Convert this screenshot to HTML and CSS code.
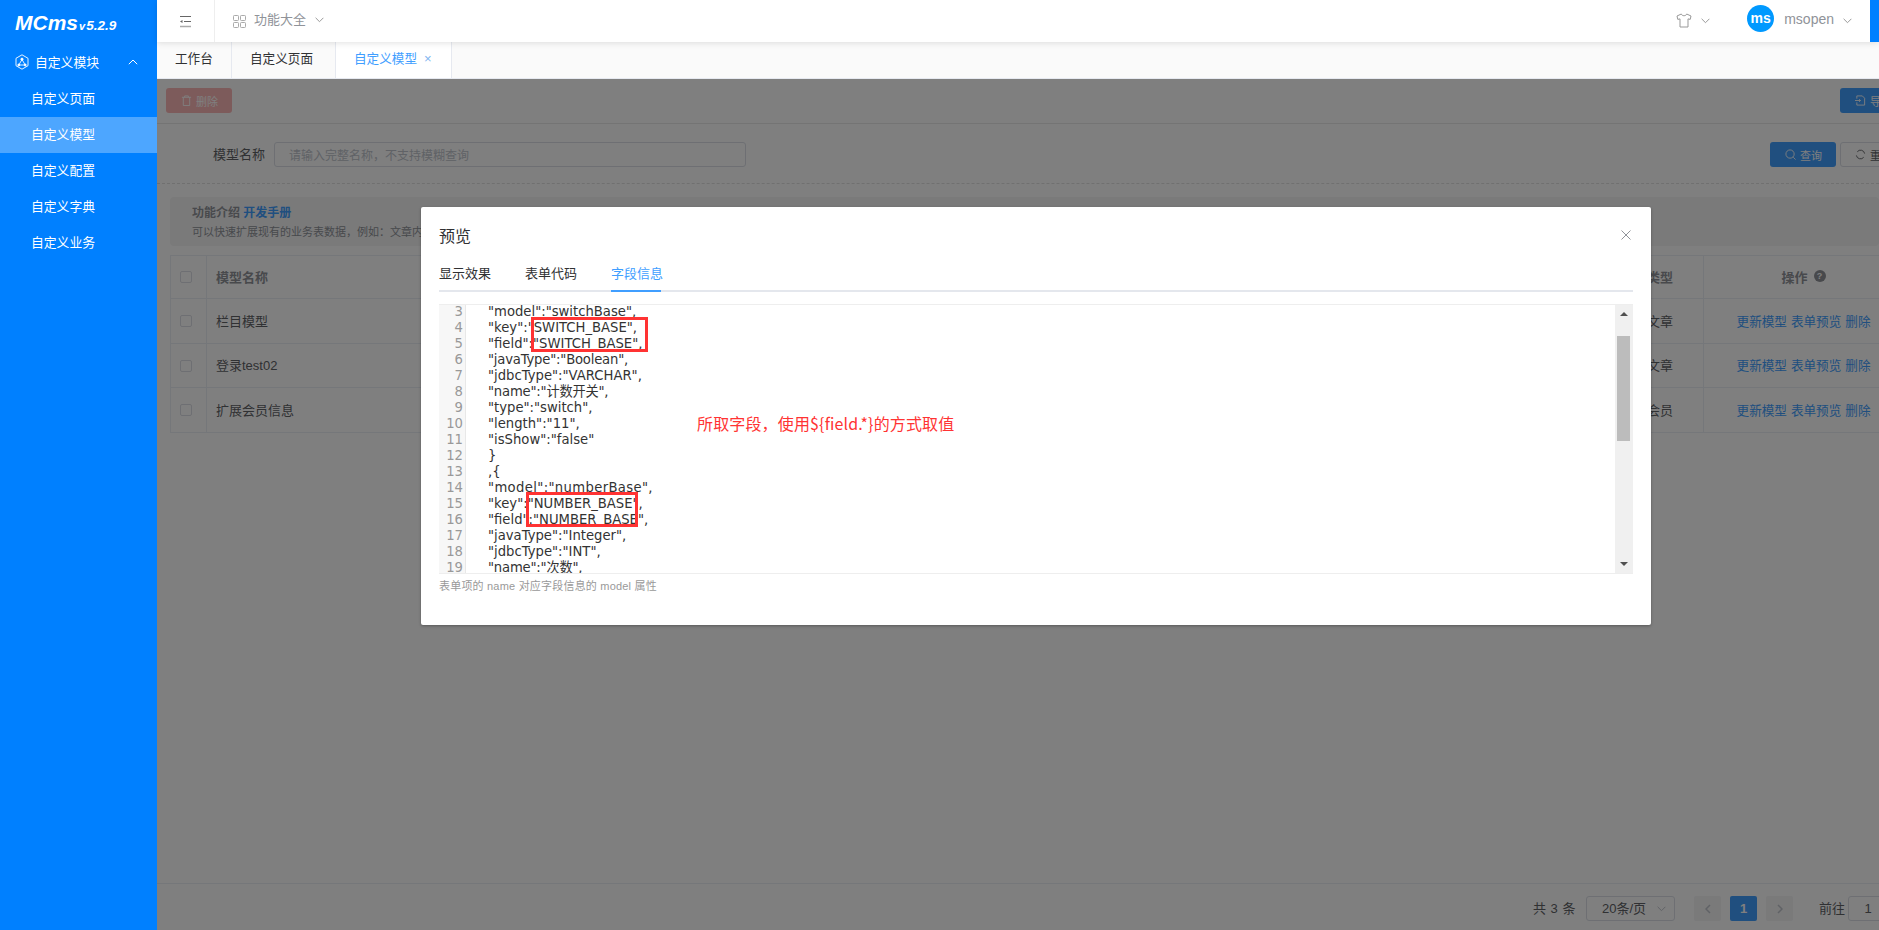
FILE: index.html
```html
<!DOCTYPE html>
<html lang="zh-CN">
<head>
<meta charset="utf-8">
<title>MCms</title>
<link rel="stylesheet" href="styles.css">
</head>
<body>
<div class="app">
  <aside class="sidebar">
    <div class="logo"><span class="logo-name">MCms</span><span class="logo-v">v</span><span class="logo-ver">5.2.9</span></div>
    <div class="menu-group">
      <svg class="menu-ico" viewBox="0 0 14 16" width="14" height="16" fill="none" stroke="#fff" stroke-width=".9"><path d="M7 .8 13 4.300v7.400L7 15.200 1 11.700V4.300z"/><path d="M7 5.500 3.800 11h6.400z"/><circle cx="7" cy="5.200" r="1.100" fill="#fff"/><circle cx="3.800" cy="11" r="1" fill="#fff"/><circle cx="10.200" cy="11" r="1" fill="#fff"/></svg>
      <span class="menu-group-text">自定义模块</span>
      <svg class="menu-caret" viewBox="0 0 10 6" width="10" height="6" fill="none" stroke="#fff" stroke-width="1"><path d="M.8 5.200 5 1l4.200 4.200"/></svg>
    </div>
    <div class="menu-item">自定义页面</div>
    <div class="menu-item active">自定义模型</div>
    <div class="menu-item">自定义配置</div>
    <div class="menu-item">自定义字典</div>
    <div class="menu-item">自定义业务</div>
  </aside>
  <main class="main">
    <header class="topbar">
      <div class="fold">
        <svg viewBox="0 0 13 13" width="13" height="13" fill="none" stroke="#666" stroke-width="1"><path d="M1 1.500h11M5 6.500h7"/><path d="M1 11.500h11" stroke="#aaa" stroke-width="1.500"/><path d="M1 6.500 3.500 5v3z" fill="#666" stroke="none"/></svg>
      </div>
      <div class="topnav">
        <svg viewBox="0 0 13 13" width="13" height="13" fill="none" stroke="#aaa" stroke-width="1"><rect x=".5" y=".5" width="5" height="5" rx=".8"/><rect x="7.500" y=".5" width="5" height="5" rx=".8"/><rect x=".5" y="7.500" width="5" height="5" rx=".8"/><rect x="7.500" y="7.500" width="5" height="5" rx=".8"/></svg>
        <span class="topnav-text">功能大全</span>
        <svg class="chev chev-nav" viewBox="0 0 9 6" width="9" height="6" fill="none" stroke="#999" stroke-width="1"><path d="M.6.8 4.500 4.700 8.400.8"/></svg>
      </div>
      <div class="top-right">
        <svg class="shirt" viewBox="0 0 16 15" width="16" height="15" fill="none" stroke="#999" stroke-width="1"><path d="M5.300 1 1 3l.8 3.400 2.200-.5V14h8V5.900l2.200.5L15 3l-4.300-2C10 3.300 6 3.300 5.300 1z"/></svg>
        <svg class="chev shirt-chev" viewBox="0 0 9 6" width="9" height="6" fill="none" stroke="#999" stroke-width="1"><path d="M.6.8 4.500 4.700 8.400.8"/></svg>
        <div class="avatar">ms</div>
        <span class="username">msopen</span>
        <svg class="chev" viewBox="0 0 9 6" width="9" height="6" fill="none" stroke="#999" stroke-width="1"><path d="M.6.8 4.500 4.700 8.400.8"/></svg>
        <div class="strip"></div>
      </div>
    </header>
    <nav class="tabsbar">
      <div class="tab">工作台</div>
      <div class="tab tab-page">自定义页面</div>
      <div class="tab current">自定义模型<span class="tab-close">×</span></div>
    </nav>
    <section class="content">
      <div class="toolbar">
        <button class="btn btn-del">
          <svg viewBox="0 0 12 12" width="11" height="11" fill="none" stroke="#fff" stroke-width="1"><path d="M1 2.500h10M4 2.500V1h4v1.500M2.500 2.500v9h7v-9"/></svg>删除</button>
        <button class="btn btn-import">
          <svg viewBox="0 0 12 12" width="11" height="11" fill="none" stroke="#fff" stroke-width="1"><path d="M2 4V1h6l2.500 2.500V11H2V8"/><path d="M0 6h6M4.500 4.500 6 6 4.500 7.500"/></svg>导入</button>
      </div>
      <div class="search">
        <label class="search-label">模型名称</label>
        <div class="search-input">请输入完整名称，不支持模糊查询</div>
        <button class="btn btn-query">
          <svg viewBox="0 0 12 12" width="11" height="11" fill="none" stroke="#fff" stroke-width="1"><circle cx="5.500" cy="5.500" r="4.500"/><path d="m9 9 2.500 2.500"/></svg>查询</button>
        <button class="btn btn-reset">
          <svg viewBox="0 0 12 12" width="11" height="11" fill="none" stroke="#606266" stroke-width="1"><path d="M10.500 5A4.500 4.500 0 0 0 2.500 3M1.500 7a4.500 4.500 0 0 0 8 2"/></svg>重置</button>
      </div>
      <div class="notice">
        <div class="notice-title">功能介绍 <a class="notice-link">开发手册</a></div>
        <div class="notice-desc">可以快速扩展现有的业务表数据，例如：文章内容、会员信息等，不需要修改原有的业务表</div>
      </div>
      <div class="table">
        <div class="row head">
          <div class="c-check"><i class="box"></i></div>
          <div class="c-name">模型名称</div>
          <div class="c-type">类型</div>
          <div class="c-act">操作 <i class="help">?</i></div>
        </div>
        <div class="row">
          <div class="c-check"><i class="box"></i></div>
          <div class="c-name">栏目模型</div>
          <div class="c-type">文章</div>
          <div class="c-act"><a>更新模型</a> <a>表单预览</a> <a>删除</a></div>
        </div>
        <div class="row short">
          <div class="c-check"><i class="box"></i></div>
          <div class="c-name">登录test02</div>
          <div class="c-type">文章</div>
          <div class="c-act"><a>更新模型</a> <a>表单预览</a> <a>删除</a></div>
        </div>
        <div class="row">
          <div class="c-check"><i class="box"></i></div>
          <div class="c-name">扩展会员信息</div>
          <div class="c-type">会员</div>
          <div class="c-act"><a>更新模型</a> <a>表单预览</a> <a>删除</a></div>
        </div>
      </div>
      <div class="pager">
        <span class="pg-total">共 3 条</span>
        <div class="pg-size">20条/页<svg viewBox="0 0 9 6" width="9" height="6" fill="none" stroke="#c0c4cc" stroke-width="1"><path d="M.6.8 4.500 4.700 8.400.8"/></svg></div>
        <div class="pg-btn"><svg viewBox="0 0 6 10" width="6" height="10" fill="none" stroke="#c0c4cc" stroke-width="1.500"><path d="M5 1 1 5l4 4"/></svg></div>
        <div class="pg-btn on">1</div>
        <div class="pg-btn"><svg viewBox="0 0 6 10" width="6" height="10" fill="none" stroke="#c0c4cc" stroke-width="1.500"><path d="m1 1 4 4-4 4"/></svg></div>
        <span class="pg-go">前往</span>
        <div class="pg-input">1</div>
      </div>
      <div class="mask"></div>
      <div class="dialog">
        <div class="dlg-head">
          <span class="dlg-title">预览</span>
          <svg class="dlg-close" viewBox="0 0 10 10" width="10" height="10" fill="none" stroke="#909399" stroke-width="1"><path d="m.5.500 9 9M9.500.500l-9 9"/></svg>
        </div>
        <div class="dlg-tabs">
          <span class="dlg-tab">显示效果</span>
          <span class="dlg-tab">表单代码</span>
          <span class="dlg-tab on">字段信息</span>
        </div>
        <div class="code">
          <div class="gutter">
            <div>3</div><div>4</div><div>5</div><div>6</div><div>7</div><div>8</div><div>9</div><div>10</div><div>11</div><div>12</div><div>13</div><div>14</div><div>15</div><div>16</div><div>17</div><div>18</div><div>19</div>
          </div>
          <div class="lines">
            <div>"model":"switchBase",</div>
            <div>"key":"SWITCH_BASE",</div>
            <div>"field":"SWITCH_BASE",</div>
            <div class="tight">"javaType":"Boolean",</div>
            <div>"jdbcType":"VARCHAR",</div>
            <div class="tight">"name":"计数开关",</div>
            <div>"type":"switch",</div>
            <div>"length":"11",</div>
            <div>"isShow":"false"</div>
            <div>}</div>
            <div>,{</div>
            <div class="wider">"model":"numberBase",</div>
            <div>"key":"NUMBER_BASE",</div>
            <div>"field":"NUMBER_BASE",</div>
            <div>"javaType":"Integer",</div>
            <div>"jdbcType":"INT",</div>
            <div class="tight">"name":"次数",</div>
          </div>
          <div class="scrollbar">
            <i class="arrow up"></i>
            <i class="thumb"></i>
            <i class="arrow down"></i>
          </div>
          <i class="mark mark-a"></i>
          <i class="mark mark-b"></i>
          <span class="note">所取字段，使用${field.*}的方式取值</span>
        </div>
        <div class="hint">表单项的 name 对应字段信息的 model 属性</div>
      </div>
    </section>
  </main>
</div>
</body>
</html>
```
FILE: styles.css
```css
* { box-sizing: border-box; }
html, body { margin: 0; padding: 0; height: 100%; overflow: hidden; }
body { font-family: "Liberation Sans", "Noto Sans CJK SC", sans-serif; font-size: 13px; color: #333; background: #fff; }
.app { display: flex; width: 1879px; height: 930px; overflow: hidden; }

.sidebar { width: 157px; flex: none; background: #0080ff; color: #fff; }
.logo { height: 42px; padding: 11px 0 0 15px; font-style: italic; font-weight: 700; white-space: nowrap; line-height: 24px; }
.logo-name { font-size: 21px; }
.logo-v { font-size: 11px; margin-left: 1px; }
.logo-ver { font-size: 13.500px; margin-left: 1px; }
.menu-group { height: 39px; display: flex; align-items: center; padding-left: 15px; font-size: 12.800px; }
.menu-ico { margin-right: 6px; }
.menu-group-text { flex: 1; }
.menu-caret { margin-right: 19px; }
.menu-item { height: 36px; line-height: 36px; padding-left: 31px; font-size: 12.800px; }
.menu-item.active { background: #4da6ff; }

.main { flex: 1; min-width: 0; display: flex; flex-direction: column; }
.topbar { height: 42px; flex: none; display: flex; align-items: center; background: #fff; box-shadow: 0 1px 6px rgba(0,0,0,.12); position: relative; z-index: 2; }
.fold { width: 58px; height: 42px; border-right: 1px solid #eee; display: flex; align-items: center; justify-content: center; padding-right: 1px; }
.topnav { display: flex; align-items: center; padding-left: 18px; color: #909399; }
.topnav-text { margin: 0 9px 0 8px; font-size: 13px; position: relative; top: -3px; }
.chev-nav { position: relative; top: -1px; }
.top-right { margin-left: auto; display: flex; align-items: center; height: 42px; }
.shirt { margin-right: 9px; position: relative; top: -1px; }
.shirt-chev { margin-right: 37px; }
.avatar { width: 27px; height: 27px; border-radius: 50%; background: #0099ff; color: #fff; font-weight: 700; font-size: 14px; line-height: 26px; text-align: center; margin-top: -5px; }
.username { margin: 0 9px 0 10px; color: #909399; font-size: 14px; position: relative; top: -2px; }
.strip { width: 9px; height: 42px; background: #0080ff; margin-left: 18px; }

.tabsbar { height: 37px; flex: none; display: flex; background: #fafafa; border-bottom: 1px solid #e6e9f0; }
.tab { height: 36px; padding: 0 18px; line-height: 34px; font-size: 12.600px; color: #303133; border-right: 1px solid #e6e9f0; white-space: nowrap; }
.tab:first-child { width: 75px; }
.tab-page { width: 104px; }
.tab.current { width: 116px; color: #409eff; background: #fff; padding: 0 0 0 18px; }
.tab-close { margin-left: 7px; font-size: 13px; color: #7fb5f0; }

.content { flex: 1; position: relative; background: #fff; overflow: hidden; }
.toolbar { height: 45px; display: flex; align-items: flex-start; padding: 9px 0 0 9px; border-bottom: 1px solid #e8e8e8; justify-content: space-between; }
.btn { height: 25px; border: 1px solid transparent; border-radius: 3px; font: inherit; font-size: 11px; color: #fff; display: inline-flex; align-items: center; gap: 4px; padding: 0 0 0 14px; flex: none; white-space: nowrap; }
.btn-del { width: 66px; background: #fab6b6; }
.btn-import { width: 66px; background: #409eff; margin-right: -27px; }
.search { height: 60px; border-bottom: 1px dashed #e0e0e0; display: flex; align-items: flex-start; padding: 18px 0 0 56px; }
.search-label { width: 52px; line-height: 25px; color: #606266; margin-right: 9px; white-space: nowrap; flex: none; }
.search-input { width: 472px; height: 25px; border: 1px solid #dcdfe6; border-radius: 3px; line-height: 24px; padding: 1px 0 0 14px; font-size: 12px; color: #c0c4cc; flex: none; }
.btn-query { width: 66px; background: #409eff; margin-left: auto; }
.btn-reset { width: 66px; background: #fff; border-color: #dcdfe6; color: #606266; margin: 0 -27px 0 4px; }
.notice { margin: 13px 0 0 13px; height: 49px; background: #f4f4f5; border-radius: 4px; padding: 8px 0 0 22px; color: #909399; white-space: nowrap; overflow: hidden; }
.notice-title { font-weight: 700; font-size: 12px; line-height: 16px; }
.notice-link { color: #409eff; }
.notice-desc { font-size: 11px; line-height: 18px; margin-top: 2px; }
.table { margin: 9px 0 0 13px; width: 1733px; border-top: 1px solid #ebeef5; border-left: 1px solid #ebeef5; }
.row { display: flex; height: 45px; border-bottom: 1px solid #ebeef5; color: #606266; align-items: stretch; }
.row.head { height: 43px; font-weight: 700; color: #909399; }
.row.short { height: 44px; }
.c-check { width: 36px; flex: none; border-right: 1px solid #ebeef5; display: flex; align-items: center; padding-left: 9px; }
.box { width: 12px; height: 12px; border: 1px solid #dcdfe6; border-radius: 2px; background: #fff; }
.c-name { flex: 1; padding: 0 0 2px 9px; display: flex; align-items: center; }
.c-type { flex: none; width: 57px; display: flex; align-items: center; border-right: 1px solid #ebeef5; padding-bottom: 2px; }
.c-act { width: 199px; flex: none; display: flex; align-items: center; justify-content: center; gap: 4px; padding-bottom: 2px; }
.c-act a { color: #409eff; font-weight: 400; font-size: 12.600px; }
.help { width: 12px; height: 12px; border-radius: 50%; background: #909399; color: #fff; font-size: 9px; line-height: 12px; text-align: center; font-style: normal; margin-left: 2px; }
.pager { position: absolute; left: 0; width: 1760px; bottom: 0; height: 47px; border-top: 1px solid #ebeef5; display: flex; align-items: flex-start; padding: 12px 0 0 1376px; color: #606266; font-size: 13px; line-height: 25px; }
.pager > * { flex: none; }
.pg-total { width: 53px; white-space: nowrap; word-spacing: 1px; }
.pg-size { width: 89px; height: 25px; border: 1px solid #dcdfe6; border-radius: 3px; display: flex; align-items: center; justify-content: space-between; padding: 0 8px 0 15px; margin-right: 19px; }
.pg-btn { width: 27px; height: 25px; background: #f4f4f5; border-radius: 2px; margin-right: 9px; display: flex; align-items: center; justify-content: center; font-weight: 700; color: #c0c4cc; }
.pg-btn.on { background: #409eff; color: #fff; }
.pg-go { margin: 0 3px 0 17px; white-space: nowrap; }
.pg-input { width: 40px; height: 25px; border: 1px solid #dcdfe6; border-radius: 3px; text-align: center; line-height: 23px; }

.mask { position: absolute; inset: 0; background: rgba(0,0,0,.5); }
.dialog { position: absolute; left: 264px; top: 128px; width: 1230px; height: 418px; background: #fff; border-radius: 2px; box-shadow: 0 1px 3px rgba(0,0,0,.3); padding: 0 18px; }
.dlg-head { height: 53px; display: flex; justify-content: space-between; align-items: center; padding-top: 3px; }
.dlg-title { font-size: 16px; color: #303133; }
.dlg-close { margin-right: 2px; }
.dlg-tabs { height: 32px; border-bottom: 2px solid #e4e7ed; display: flex; gap: 36px; font-size: 13px; color: #303133; }
.dlg-tab { width: 50px; height: 32px; line-height: 28px; white-space: nowrap; }
.dlg-tab.on { color: #409eff; border-bottom: 2px solid #409eff; }
.code { position: relative; margin-top: 12px; height: 270px; display: flex; overflow: hidden; border-top: 1px solid #eee; border-bottom: 1px solid #eee; font-family: "DejaVu Sans", "Noto Sans CJK SC", sans-serif; font-size: 13.200px; line-height: 16px; color: #333; }
.gutter { width: 27px; flex: none; background: #f7f7f7; border-right: 1px solid #e8e8e8; text-align: right; padding: 0 2px 0 0; color: #999; margin-top: -1px; }
.lines { flex: 1; padding-left: 22px; margin-top: -1px; white-space: nowrap; }
.wider { letter-spacing: .35px; }
.tight { letter-spacing: -.2px; }
.scrollbar { width: 18px; flex: none; background: #f0f0f0; position: relative; }
.arrow { position: absolute; left: 5px; width: 0; height: 0; border-left: 4px solid transparent; border-right: 4px solid transparent; }
.arrow.up { top: 7px; border-bottom: 4px solid #505050; }
.arrow.down { bottom: 7px; border-top: 4px solid #505050; }
.thumb { position: absolute; left: 2px; top: 31px; width: 13px; height: 105px; background: #bcbcbc; }
.mark { position: absolute; border: 3px solid #f33; }
.mark-a { left: 92px; top: 12px; width: 117px; height: 35px; }
.mark-b { left: 87px; top: 187px; width: 112px; height: 35px; }
.note { position: absolute; left: 258px; top: 107px; font-family: "Noto Sans CJK SC", sans-serif; font-size: 16px; line-height: 22px; letter-spacing: .15px; color: #f33; white-space: nowrap; }
.hint { margin-top: 5px; font-size: 11px; line-height: 14px; letter-spacing: .2px; color: #999; }
```
